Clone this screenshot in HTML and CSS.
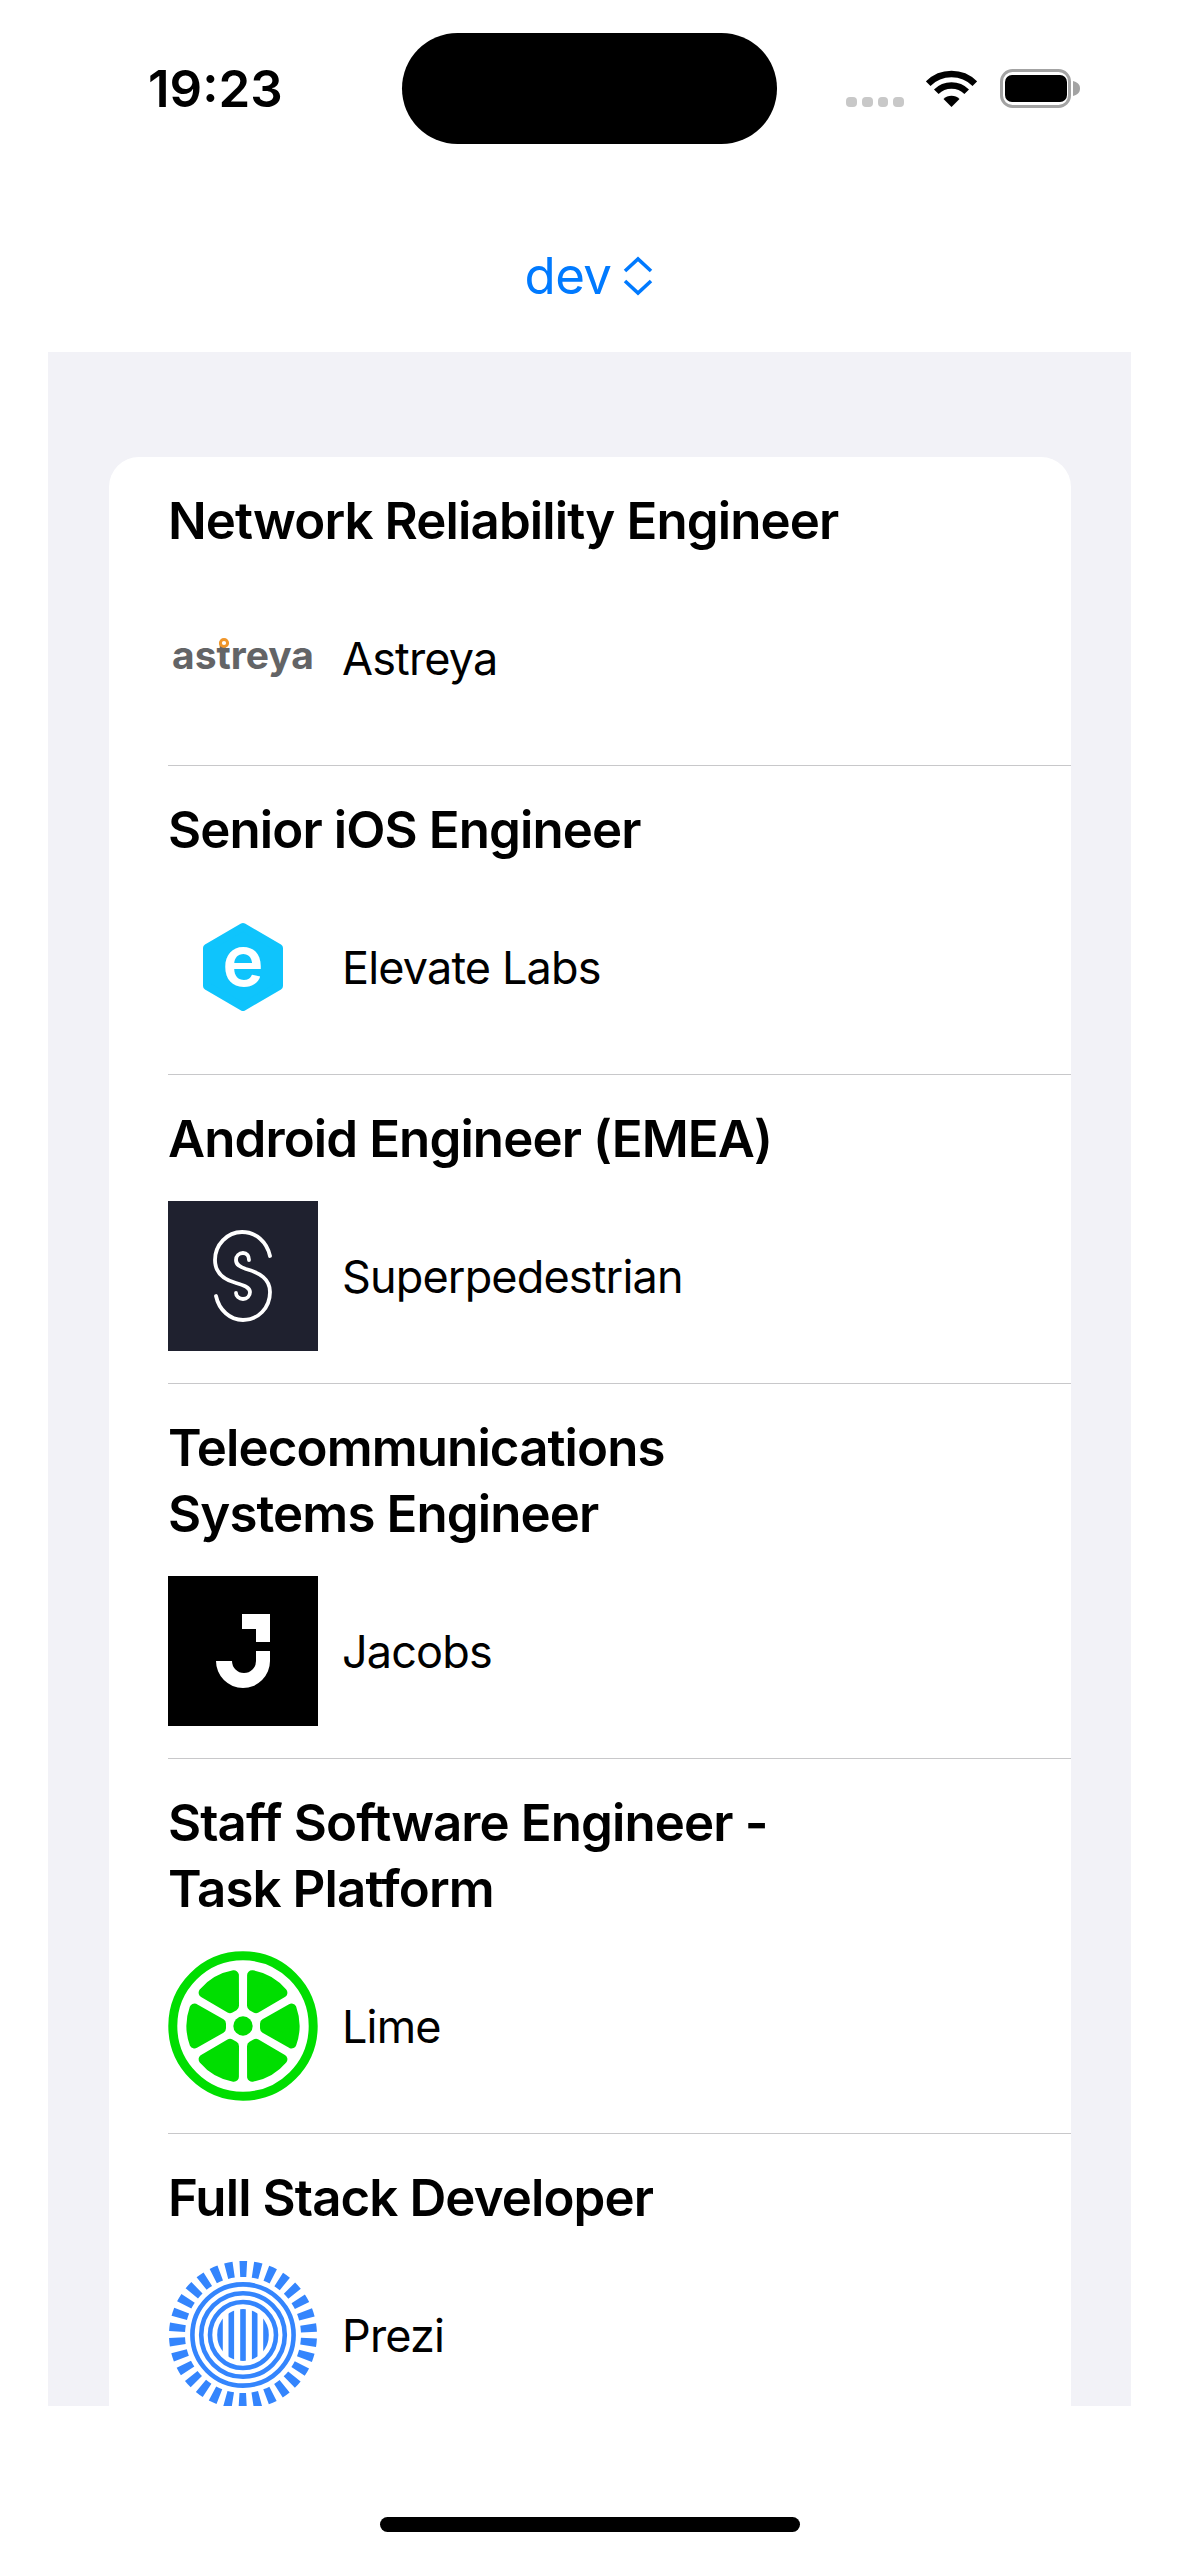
FILE: index.html
```html
<!DOCTYPE html>
<html lang="en">

<head>
    <meta charset="UTF-8">
    <meta name="viewport" content="width=device-width, initial-scale=1.0">
    <title>Jobs</title>
    <link rel="stylesheet" href="styles.css">
</head>

<body>
    <header class="status-bar">
        <div class="time">19:23</div>
        <div class="island"></div>
        <div class="status-icons">
            <div class="signal-dots">
                <span></span><span></span><span></span><span></span>
            </div>
            <svg class="wifi" width="51" height="37" viewBox="0 0 51 37">
                <path d="M2.2 13.7A33 33 0 0 1 48.8 13.7" fill="none" stroke="#000" stroke-width="6.5" />
                <path d="M10.3 21.8A21.5 21.5 0 0 1 40.7 21.8" fill="none" stroke="#000" stroke-width="6.5" />
                <path d="M25.5 37L17.5 29A11.3 11.3 0 0 1 33.5 29Z" fill="#000" />
            </svg>
            <svg class="battery" width="80" height="39" viewBox="0 0 80 39">
                <rect x="1.5" y="1.5" width="68" height="36" rx="11" fill="none" stroke="#a3a3a3" stroke-width="3" />
                <rect x="5" y="6" width="62" height="27" rx="7" fill="#000" />
                <path d="M73 12C77 13 80 15 80 19.5C80 24 77 26 73 27Z" fill="#a3a3a3" />
            </svg>
        </div>
    </header>

    <div class="picker">
        <span>dev</span>
        <svg width="32" height="40" viewBox="0 0 32 40">
            <path d="M3 15L16 3L29 15M3 25L16 37L29 25" fill="none" stroke="#007aff" stroke-width="3.6" />
        </svg>
    </div>

    <main class="panel">
        <section class="card">

            <article class="job">
                <h2>Network Reliability Engineer</h2>
                <div class="company">
                    <svg class="logo" viewBox="0 0 150 150">
                        <text class="astreya-word" x="4" y="86">astreya</text>
                        <circle cx="56" cy="60" r="3.6" fill="#fff" stroke="#f0962a" stroke-width="3" />
                    </svg>
                    <span>Astreya</span>
                </div>
            </article>

            <article class="job">
                <h2>Senior iOS Engineer</h2>
                <div class="company">
                    <svg class="logo" viewBox="0 0 150 150">
                        <polygon points="75,35 111,56 111,94 75,115 39,94 39,56" fill="#0fc4fc" stroke="#0fc4fc" stroke-width="8" stroke-linejoin="round" />
                        <text class="elevate-e" x="75" y="94" text-anchor="middle">e</text>
                    </svg>
                    <span>Elevate Labs</span>
                </div>
            </article>

            <article class="job">
                <h2>Android Engineer (EMEA)</h2>
                <div class="company">
                    <svg class="logo" viewBox="0 0 150 150">
                        <rect width="150" height="150" fill="#1f212f" />
                        <g fill="none" stroke="#fff" stroke-width="3.8" stroke-linecap="round">
                            <path d="M102 55C99 41 88 31 74 31C59 31 47 44 47 59C47 73 57 79 68 82C75 84 82 86 82 91C82 95 79 98 75 98C71 98 68 95 68 92" />
                            <path d="M81 59C81 55 79 52 75 52C71 52 68 55 68 59C68 64 72 66 78 68C92 72 102 78 102 91C102 107 90 119 75 119C62 119 51 109 48 95" />
                        </g>
                    </svg>
                    <span>Superpedestrian</span>
                </div>
            </article>

            <article class="job">
                <h2>Telecommunications Systems Engineer</h2>
                <div class="company">
                    <svg class="logo" viewBox="0 0 150 150">
                        <rect width="150" height="150" fill="#000" />
                        <path d="M74 38H102V66H88V53H74Z" fill="#fff" />
                        <path d="M88 75H102V85A27 27 0 0 1 48 85H64A12 12 0 0 0 88 85Z" fill="#fff" />
                    </svg>
                    <span>Jacobs</span>
                </div>
            </article>

            <article class="job">
                <h2>Staff Software Engineer - Task Platform</h2>
                <div class="company">
                    <svg class="logo" viewBox="0 0 150 150">
                        <circle cx="75" cy="75" r="70.2" fill="none" stroke="#00de00" stroke-width="9" />
                        <circle cx="75" cy="75" r="9.7" fill="#00de00" />
                        <g fill="#00de00" stroke="#00de00" stroke-width="10" stroke-linejoin="round">
                            <path d="M97 72.7L123.5 57.5A51.6 51.6 0 0 1 123.5 92.5L97 77.3Z" />
                            <path d="M97 72.7L123.5 57.5A51.6 51.6 0 0 1 123.5 92.5L97 77.3Z" transform="rotate(60 75 75)" />
                            <path d="M97 72.7L123.5 57.5A51.6 51.6 0 0 1 123.5 92.5L97 77.3Z" transform="rotate(120 75 75)" />
                            <path d="M97 72.7L123.5 57.5A51.6 51.6 0 0 1 123.5 92.5L97 77.3Z" transform="rotate(180 75 75)" />
                            <path d="M97 72.7L123.5 57.5A51.6 51.6 0 0 1 123.5 92.5L97 77.3Z" transform="rotate(240 75 75)" />
                            <path d="M97 72.7L123.5 57.5A51.6 51.6 0 0 1 123.5 92.5L97 77.3Z" transform="rotate(300 75 75)" />
                        </g>
                    </svg>
                    <span>Lime</span>
                </div>
            </article>

            <article class="job">
                <h2>Full Stack Developer</h2>
                <div class="company">
                    <svg class="logo" viewBox="0 0 150 150">
                        <defs>
                            <clipPath id="prezi-clip">
                                <circle cx="75" cy="75" r="26" />
                            </clipPath>
                        </defs>
                        <g fill="none" stroke="#3485fd">
                            <circle cx="75" cy="75" r="66" stroke-width="16" stroke-dasharray="7.6 6.22" stroke-dashoffset="3.8" transform="rotate(-90 75 75)" />
                            <circle cx="75" cy="75" r="50.6" stroke-width="4.6" />
                            <circle cx="75" cy="75" r="41.8" stroke-width="4.6" />
                            <circle cx="75" cy="75" r="33" stroke-width="4.6" />
                        </g>
                        <g fill="#3485fd" clip-path="url(#prezi-clip)">
                            <rect x="49.2" y="45" width="5.6" height="60" />
                            <rect x="60.5" y="45" width="5.6" height="60" />
                            <rect x="72.2" y="45" width="5.6" height="60" />
                            <rect x="83.9" y="45" width="5.6" height="60" />
                            <rect x="95.2" y="45" width="5.6" height="60" />
                        </g>
                    </svg>
                    <span>Prezi</span>
                </div>
            </article>

        </section>
    </main>

    <footer class="home-area">
        <div class="home-bar"></div>
    </footer>
</body>

</html>
```

FILE: styles.css
```css
html, body {
    margin: 0;
    height: 2556px;
    overflow: hidden;
    background: #fff;
}
body {
    font-family: Inter, "Liberation Sans", sans-serif;
    color: #000;
}

.status-bar {
    display: flex;
    align-items: center;
    height: 111px;
    padding: 33px 0 0 148px;
}
.time {
    width: 254px;
    font-size: 51px;
    font-weight: 600;
    line-height: 56px;
    white-space: nowrap;
}
.island {
    width: 375px;
    height: 111px;
    border-radius: 56px;
    background: #000;
    flex-shrink: 0;
}
.status-icons {
    display: flex;
    align-items: flex-end;
    margin-left: 69px;
    height: 39px;
}
.signal-dots {
    display: flex;
    gap: 5px;
    width: 58px;
    margin-bottom: 1px;
}
.signal-dots span {
    width: 11px;
    height: 10px;
    border-radius: 4px;
    background: #c8c8c8;
}
.wifi {
    margin-left: 22px;
    margin-bottom: 1px;
}
.battery {
    margin-left: 23px;
}

.picker {
    display: flex;
    justify-content: center;
    align-items: center;
    gap: 11px;
    height: 208px;
    box-sizing: border-box;
    padding-top: 56px;
    color: #007aff;
    font-size: 51px;
    letter-spacing: -0.6px;
    line-height: 60px;
}

.panel {
    width: 1083px;
    height: 2054px;
    box-sizing: border-box;
    margin-left: 48px;
    padding: 105px 60px 0 61px;
    overflow: hidden;
    background: #f2f2f7;
}
.card {
    padding-left: 59px;
    border-radius: 30px;
    background: #fff;
}
.job {
    padding: 31px 0 32px;
    border-bottom: 1px solid #c8c8ca;
}
.job h2 {
    margin: 0 0 29px;
    max-width: 690px;
    font-size: 51px;
    font-weight: 600;
    letter-spacing: -0.9px;
    line-height: 66px;
}
.company {
    display: flex;
    align-items: center;
    gap: 24px;
    font-size: 45px;
    letter-spacing: -0.85px;
}
.logo {
    display: block;
    width: 150px;
    height: 150px;
    flex-shrink: 0;
}
.astreya-word {
    font-size: 39px;
    font-weight: 700;
    letter-spacing: 0;
    fill: #636466;
}
.elevate-e {
    font-size: 70px;
    font-weight: 600;
    letter-spacing: 0;
    fill: #fff;
}

.home-area {
    display: flex;
    justify-content: center;
    padding-top: 111px;
}
.home-bar {
    width: 420px;
    height: 15px;
    border-radius: 8px;
    background: #000;
}
```
